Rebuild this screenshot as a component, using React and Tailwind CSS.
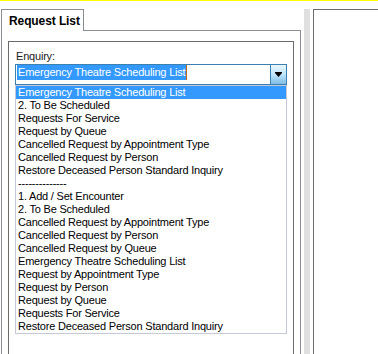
import React from 'react';

const items = [
  'Emergency Theatre Scheduling List',
  '2. To Be Scheduled',
  'Requests For Service',
  'Request by Queue',
  'Cancelled Request by Appointment Type',
  'Cancelled Request by Person',
  'Restore Deceased Person Standard Inquiry',
  '--------------',
  '1. Add / Set Encounter',
  '2. To Be Scheduled',
  'Cancelled Request by Appointment Type',
  'Cancelled Request by Person',
  'Cancelled Request by Queue',
  'Emergency Theatre Scheduling List',
  'Request by Appointment Type',
  'Request by Person',
  'Request by Queue',
  'Requests For Service',
  'Restore Deceased Person Standard Inquiry',
];

const ComboArrow = () => (
  <svg width="7" height="5" viewBox="0 0 7 5">
    <path d="M0 0h7v1H0z M0 1h7L3.5 5z" fill="#000" />
  </svg>
);

export default function App() {
  return (
    <div
      className="w-[378px] h-[354px] overflow-hidden bg-white border-t border-[#ffff00] text-black"
      style={{ fontFamily: '"Liberation Sans", Arial, sans-serif' }}
    >
      <div className="flex pt-[8px] h-full">
        {/* left: tab control */}
        <div className="ml-[1px] w-[300px] flex flex-col">
          <div className="flex h-[22px]">
            <div className="w-[83px] h-full border-l border-t border-r border-[#898c95] flex items-center pl-[7px] pt-[1px] text-[12px] font-bold tracking-[-0.1px]">
              Request List
            </div>
            <div className="flex-1 border-b border-[#898c95]" />
          </div>
          <div className="flex-1 border-l border-r border-[#898c95] px-[6px] pt-[10px]">
            <div className="h-full border-l border-t border-r border-[#6b6b6b] px-[6px] pt-[8px]">
              <div className="ml-[1px] h-[13px] leading-[13px] text-[11px] tracking-[-0.2px] text-[#222]">Enquiry:</div>
              <div className="mt-[1px] flex h-[21px]">
                <div className="flex-1 border-l border-t border-b border-[#3c7fb1] pl-[1px]">
                  <div className="flex items-stretch h-[15px]">
                    <span className="bg-[#3399ff] text-white text-[11px] leading-[15px] tracking-[-0.2px] pl-[1px] pr-[1px]">
                      Emergency Theatre Scheduling List
                    </span>
                    <span className="w-[1px] bg-[#c0661a]" />
                  </div>
                </div>
                <div className="w-[17px] h-full border border-[#3c7fb1] bg-gradient-to-b from-[#eaf6fd] via-[#bee6fd] to-[#7ebde6] flex items-center justify-center">
                  <ComboArrow />
                </div>
              </div>
              <div className="border border-[#c5c8d8] w-[272px]">
                {items.map((t, i) => (
                  <div
                    key={i}
                    className={`h-[13px] leading-[13px] text-[11px] tracking-[-0.2px] pl-[2px] whitespace-nowrap ${
                      i === 0 ? 'bg-[#3399ff] text-white' : ''
                    }`}
                  >
                    {t}
                  </div>
                ))}
              </div>
            </div>
          </div>
        </div>
        {/* splitter */}
        <div className="ml-[3px] w-[6px] bg-[#e0e0e0]" />
        {/* right panel */}
        <div className="ml-[3px] flex-1 border-l border-t border-[#6b6b6b]" />
      </div>
    </div>
  );
}
